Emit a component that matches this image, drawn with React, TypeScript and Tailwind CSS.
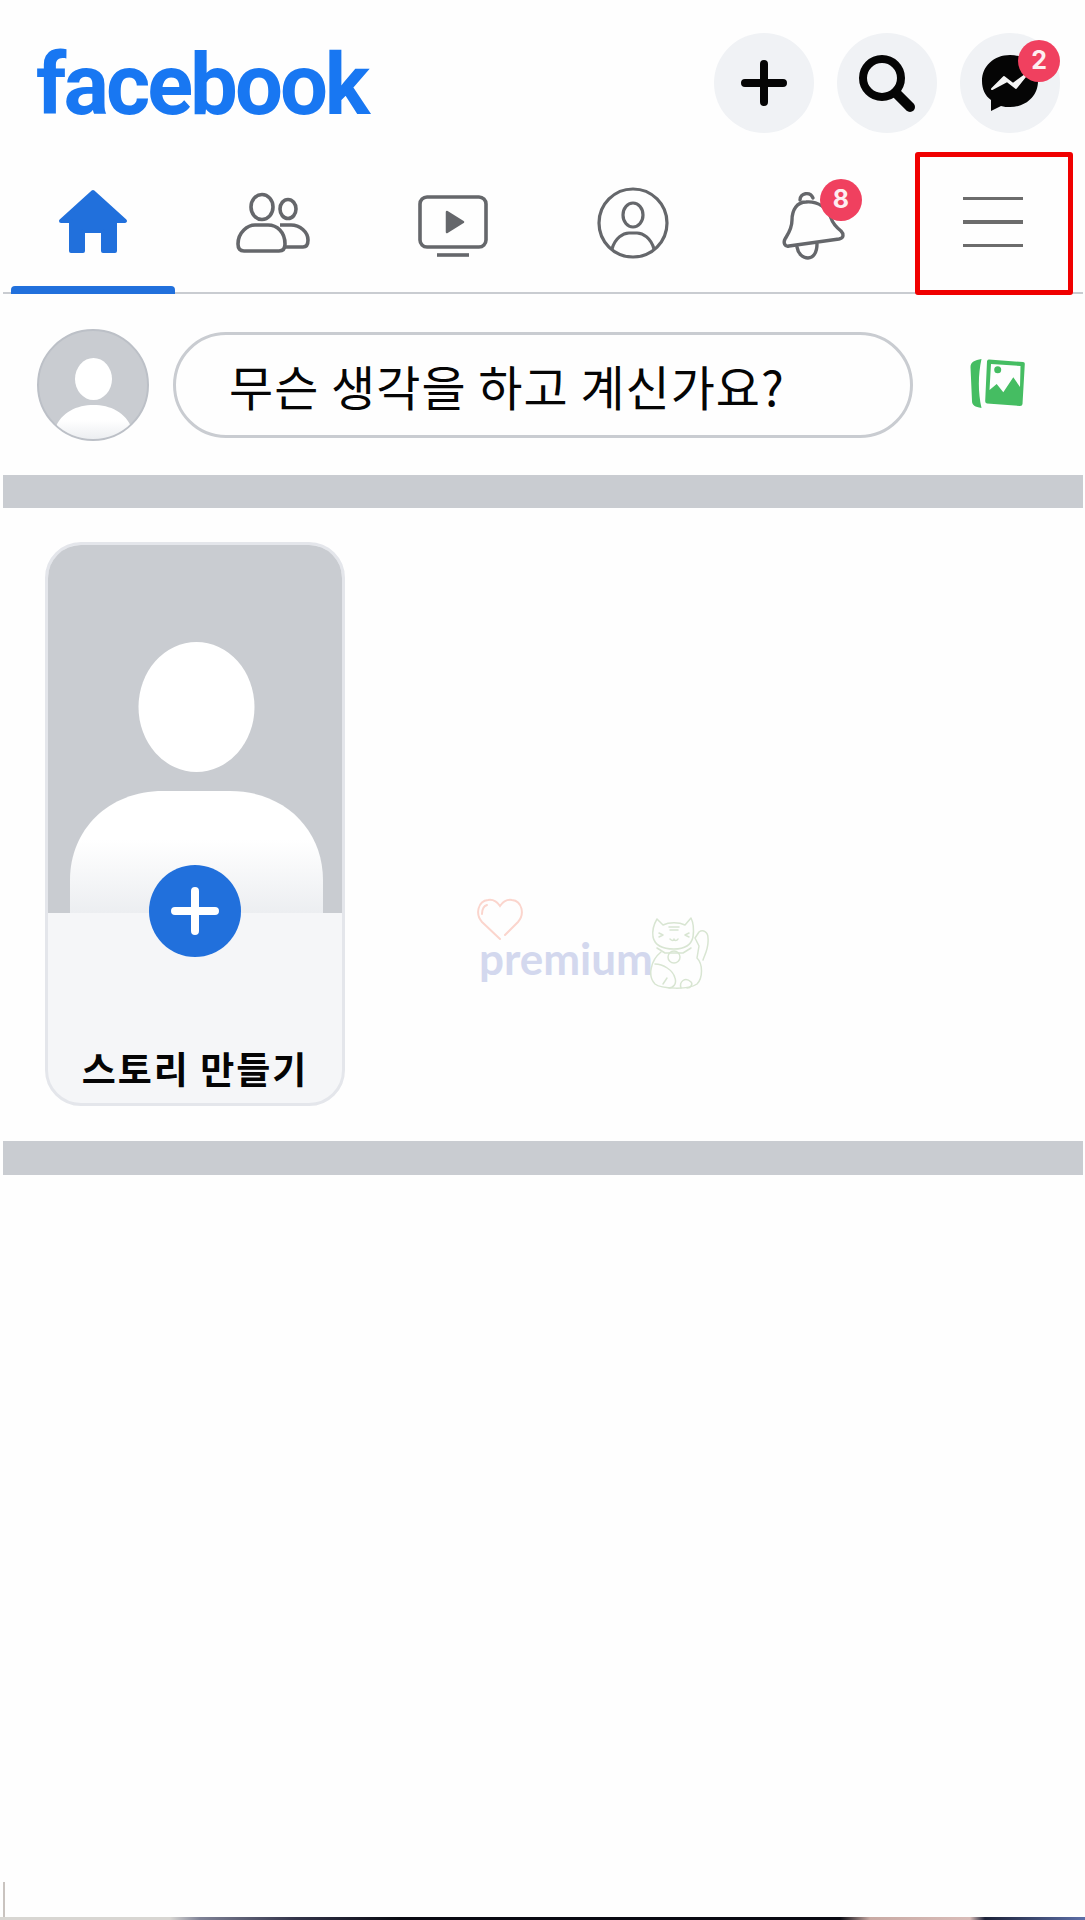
import React from 'react';

const gray = '#65676b';

const Badge = ({ count, className }: { count: number; className: string }) => (
  <span className={`absolute flex h-[42px] w-[42px] items-center justify-center rounded-full bg-[#f0405f] font-['Inter',sans-serif] text-[25px] font-bold text-[#fdeef1] ${className}`}>
    {count}
  </span>
);

const HomeIcon = () => (
  <svg viewBox="0 0 80 80" className="h-20 w-20" fill="#2170dc" stroke="#2170dc" strokeWidth="4" strokeLinejoin="round">
    <path d="M40 10 L72 39 H62 V69 H50 V49 H30 V69 H18 V39 H8 Z" />
  </svg>
);

const FriendsIcon = () => (
  <svg viewBox="0 0 80 80" className="h-20 w-20" fill="none" stroke={gray} strokeWidth="3.6">
    <ellipse cx="29" cy="25" rx="11" ry="12.5" />
    <ellipse cx="55" cy="27" rx="8" ry="9.5" />
    <path d="M5 62 C5 50 15 43 22 43 H35 C44 43 52 50 52 62 C52 67 50 69 46 69 H11 C7 69 5 67 5 62 Z" />
    <path d="M47 43 H58 C67 43 75 50 75 58 C75 63 73 65 70 65 H52" />
  </svg>
);

const WatchIcon = () => (
  <svg viewBox="0 0 80 80" className="h-20 w-20" fill="none" stroke={gray} strokeWidth="3.6">
    <rect x="7" y="15" width="66" height="50" rx="7" />
    <path d="M24 73 H56" />
    <path d="M34 30 L50 40 L34 50 Z" fill={gray} strokeWidth="2.5" strokeLinejoin="round" />
  </svg>
);

const ProfileIcon = () => (
  <svg viewBox="0 0 80 80" className="h-20 w-20" fill="none" stroke={gray} strokeWidth="3.2">
    <circle cx="40" cy="41" r="34" />
    <ellipse cx="40" cy="33" rx="10" ry="12" />
    <path d="M19 67 C22 56 30 51 36 51 H44 C50 51 58 56 61 67" />
  </svg>
);

const BellIcon = () => (
  <svg viewBox="0 0 80 80" className="h-20 w-20" fill="none" stroke={gray} strokeWidth="3.4" strokeLinecap="round" strokeLinejoin="round">
    <path d="M33 20 C24 20 19 28 19 38 C19 47 15 52 12 57 C10 61 12 65 16 64 L66 57 C71 56 71 52 68 49 C63 45 60 42 58 36 C55 26 45 19 33 20 Z" />
    <path d="M24 65 C25 72 30 76 35 76 C40 76 44 71 44 62" />
    <path d="M27 18 C27 11 37 9 40 16" />
  </svg>
);

const PhotoIcon = () => (
  <svg viewBox="0 0 56 56" className="h-[56px] w-[56px]">
    <path d="M11.5 2 C5 3 0.5 5 0.5 10 L2 44 C2 48 5 50 11.5 51 C8 35 8 18 11.5 2 Z" fill="#45bd62" />
    <path d="M19 2.5 L53 5 Q55 5 54.8 7 L52.5 47 Q52.4 49 50 49 L17 46.5 Q15 46 15.2 44 L17 4.5 Q17.2 2.4 19 2.5 Z" fill="#45bd62" />
    <path d="M21 7 L50.5 9 L50 30 L43.3 20.3 L33.3 35.3 L26.7 27 L19.5 33 Z" fill="#fefefe" />
    <circle cx="27.7" cy="12.7" r="3.5" fill="#45bd62" />
  </svg>
);

const Person = () => (
  <svg viewBox="0 0 108 108" className="h-full w-full">
    <defs>
      <linearGradient id="avatarFade" x1="0" y1="0" x2="0" y2="1">
        <stop offset="0.45" stopColor="#ffffff" />
        <stop offset="1" stopColor="#eceef1" />
      </linearGradient>
    </defs>
    <ellipse cx="54.5" cy="48" rx="18.5" ry="21" fill="#ffffff" />
    <path d="M12 108 L16 98 C22 81 38 74 54.5 74 C71 74 87 81 93 98 L97 108 Z" fill="url(#avatarFade)" />
  </svg>
);

const Watermark = () => (
  <div className="absolute left-[476px] top-[898px] h-[92px] w-[238px]">
    <svg viewBox="0 0 48 43" className="absolute left-0 top-0 h-[43px] w-[48px]" fill="none" stroke="#fbd5cd" strokeWidth="2" strokeLinecap="round">
      <path d="M24 41 L6 24 C-1 16 2 3 12 2 C18 1 22 5 24 8 C26 5 30 1 36 2 C46 3 49 16 42 24 L29 37" />
      <path d="M6 16 C6 11 8 8 11 7" />
    </svg>
    <span className="absolute left-[3px] top-[30px] font-['Lato',sans-serif] text-[44px] font-bold leading-[60px] text-[#d3d8ee]">
      premium
    </span>
    <svg viewBox="0 0 64 74" className="absolute left-[173px] top-[18px] h-[74px] w-[64px]" fill="none" stroke="#d8e5d2" strokeWidth="1.5" strokeLinecap="round" strokeLinejoin="round">
      <path d="M8 3 L14 9 C20 6 30 6 36 9 L42 2 C44 6 45 14 44 21 C42 30 34 33 25 33 C14 33 6 30 4 21 C3 14 5 8 8 3 Z" />
      <path d="M20 11 H30 M21 14 H29 M10 17 L14 19 L10 21 M40 17 L36 19 L40 21 M21 23 C23 25 25 25 25 23 C25 25 28 25 29 23" />
      <path d="M8 32 L16 37 H34 L42 32" />
      <circle cx="25" cy="41" r="6" />
      <path d="M12 36 C2 44 -2 60 6 68 C12 73 40 74 48 68 C54 62 54 48 48 42 L50 30 L46 22 L50 16 C54 13 59 16 59 22 C60 32 56 38 54 44" />
      <path d="M6 48 C14 48 24 54 26 62 C28 68 24 72 20 72 M14 68 L18 62 M32 72 C30 66 36 60 42 66 C44 68 42 72 38 72" />
    </svg>
  </div>
);

const App: React.FC = () => {
  return (
    <div className="relative flex h-[1920px] w-[1085px] flex-col overflow-hidden bg-[#fefefe] font-['Noto_Sans_CJK_KR',sans-serif]">
      <header className="mt-[33px] flex h-[100px] items-center justify-between pl-[36px] pr-[25px]">
        <span className="pt-[5px] font-['Roboto',sans-serif] text-[85px] font-bold leading-none tracking-[-3px] text-[#1877f2]">
          facebook
        </span>
        <div className="flex gap-[23px]">
          <button className="flex h-[100px] w-[100px] items-center justify-center rounded-full bg-[#f0f2f5]">
            <svg viewBox="0 0 50 50" className="h-[50px] w-[50px]" stroke="#050505" strokeWidth="8" strokeLinecap="round">
              <path d="M25 6 V44 M6 25 H44" />
            </svg>
          </button>
          <button className="flex h-[100px] w-[100px] items-center justify-center rounded-full bg-[#f0f2f5]">
            <svg viewBox="0 0 60 60" className="h-[60px] w-[60px]" fill="none" stroke="#050505" strokeWidth="8" strokeLinecap="round">
              <circle cx="25" cy="25" r="19" />
              <path d="M40 41 L53 54" strokeWidth="10" />
            </svg>
          </button>
          <button className="relative flex h-[100px] w-[100px] items-center justify-center rounded-full bg-[#f0f2f5]">
            <svg viewBox="0 0 60 60" className="h-[60px] w-[60px]">
              <path d="M30 2 C14 2 2 13 2 28 C2 36 5 43 11 47 V58 L21 53 C24 54 27 54 30 54 C46 54 58 43 58 28 C58 13 46 2 30 2 Z" fill="#050505" />
              <path d="M12 36 L24 24 L33 31 L48 20 L36 35 L27 28 Z" fill="#f5f5f5" stroke="#f5f5f5" strokeWidth="2" strokeLinejoin="round" />
            </svg>
            <Badge count={2} className="right-0 top-[7px]" />
          </button>
        </div>
      </header>

      <nav className="ml-[3px] mr-[2px] mt-[19px] flex h-[142px] border-b-2 border-[#c9ccd1]">
        <div className="relative flex w-[180px] items-center justify-center">
          <HomeIcon />
          <span className="absolute -bottom-[2px] left-[8px] right-[8px] h-[8px] rounded-t-[4px] bg-[#2170dc]" />
        </div>
        <div className="flex w-[180px] items-center justify-center"><FriendsIcon /></div>
        <div className="flex w-[180px] items-center justify-center"><WatchIcon /></div>
        <div className="flex w-[180px] items-center justify-center"><ProfileIcon /></div>
        <div className="relative flex w-[180px] items-center justify-center">
          <BellIcon />
          <Badge count={8} className="left-[97px] top-[27px]" />
        </div>
        <div className="relative flex w-[180px] flex-col items-center justify-center gap-[20px]">
          <span className="h-[3px] w-[60px] bg-[#6c6c6c]" />
          <span className="h-[4px] w-[60px] bg-[#6c6c6c]" />
          <span className="h-[3px] w-[60px] bg-[#6c6c6c]" />
          {/* red marker drawn over the screenshot */}
          <span className="absolute -bottom-[3px] left-[12px] h-[143px] w-[158px] rounded-[3px] border-[5px] border-[#f00000]" />
        </div>
      </nav>

      <section className="flex h-[181px] items-center pl-[37px]">
        <div className="h-[112px] w-[112px] shrink-0 overflow-hidden rounded-full border-2 border-[#bcc0c7] bg-[#c9ccd1]">
          <Person />
        </div>
        <div className="ml-[24px] flex h-[106px] w-[740px] items-center rounded-full border-[3px] border-[#c9ccd1] pl-[53px] text-[48px] tracking-[1px] text-[#050505]">
          무슨 생각을 하고 계신가요?
        </div>
        <div className="ml-[57px]"><PhotoIcon /></div>
      </section>

      <div className="ml-[3px] mr-[2px] h-[33px] bg-[#c9ccd1]" />

      <section className="h-[633px] pl-[45px] pt-[34px]">
        <div className="relative flex h-[564px] w-[300px] flex-col overflow-hidden rounded-[36px] border-[3px] border-[#e4e6eb] bg-[#f5f6f8]">
          <div className="h-[368px] bg-[#c9ccd1]">
            <svg viewBox="0 0 294 368" className="h-[368px] w-[294px]">
              <defs>
                <linearGradient id="storyFade" x1="0" y1="0" x2="0" y2="1">
                  <stop offset="0.4" stopColor="#ffffff" />
                  <stop offset="1" stopColor="#eceef1" />
                </linearGradient>
              </defs>
              <ellipse cx="148.5" cy="162" rx="58" ry="65" fill="#ffffff" />
              <path d="M22 368 V335 C22 285 60 246 115 246 H182 C237 246 275 285 275 335 V368 Z" fill="url(#storyFade)" />
            </svg>
          </div>
          <span className="absolute left-[101px] top-[320px] flex h-[92px] w-[92px] items-center justify-center rounded-full bg-[#2170dc]">
            <svg viewBox="0 0 48 48" className="h-[48px] w-[48px]" stroke="#ffffff" strokeWidth="8" strokeLinecap="round">
              <path d="M24 4 V44 M4 24 H44" />
            </svg>
          </span>
          <p className="mt-[132px] text-center text-[37px] font-semibold leading-[46px] tracking-[2px] text-[#050505]">스토리 만들기</p>
        </div>
      </section>

      <div className="ml-[3px] mr-[2px] h-[34px] bg-[#c9ccd1]" />

      <div className="flex flex-1 flex-col justify-end">
        <div className="ml-[3px] h-[35px] w-[2px] bg-[#c9c3bf]" />
        <div className="h-[3px] bg-[linear-gradient(90deg,#d8d6d2_0px,#d8d6d2_170px,#7f8296_200px,#33344a_295px,#090a12_400px,#090a12_840px,#c9aaa4_870px,#d9bcb8_970px,#1c2238_985px,#5d6fa8_1085px)]" />
      </div>

      <Watermark />
    </div>
  );
};

export default App;
